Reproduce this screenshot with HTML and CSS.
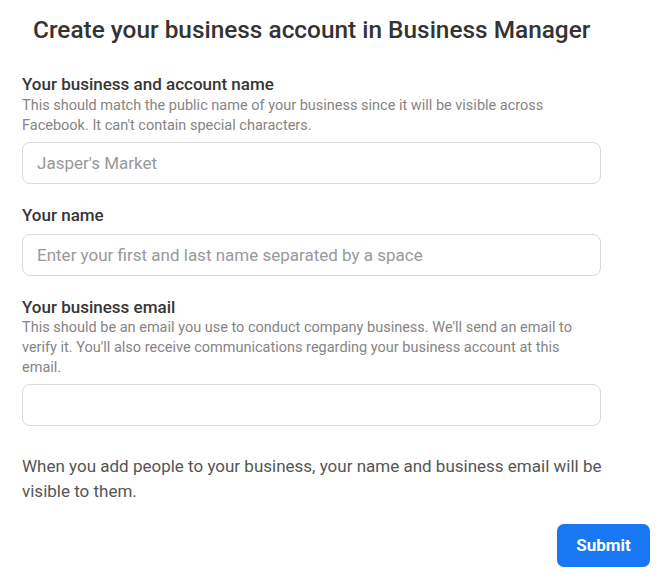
FILE: index.html
```html
<!DOCTYPE html>
<html>
<head>
<meta charset="utf-8">
<link rel="stylesheet" href="styles.css">
</head>
<body>
<div class="page">
  <h1 class="title">Create your business account in Business Manager</h1>
  <div class="field first">
    <div class="label">Your business and account name</div>
    <div class="desc">This should match the public name of your business since it will be visible across Facebook. It can't contain special characters.</div>
    <div class="input"><span class="ph">Jasper's Market</span></div>
  </div>
  <div class="field second">
    <div class="label">Your name</div>
    <div class="input"><span class="ph">Enter your first and last name separated by a space</span></div>
  </div>
  <div class="field">
    <div class="label">Your business email</div>
    <div class="desc">This should be an email you use to conduct company business. We'll send an email to verify it. You'll also receive communications regarding your business account at this email.</div>
    <div class="input"></div>
  </div>
  <p class="note">When you add people to your business, your name and business email will be visible to them.</p>
  <div class="actions"><button class="submit">Submit</button></div>
</div>
</body>
</html>
```
FILE: styles.css
```css
* { box-sizing: border-box; }
html, body { margin: 0; padding: 0; background: #fff; }
body { font-family: Roboto, "Liberation Sans", sans-serif; color: #333; }
.page { padding: 14px 11px 0 22px; display: flex; flex-direction: column; }
.title { margin: 0 0 0 11px; font-size: 24.4px; font-weight: 500; color: #333; line-height: 32px; }
.field { display: flex; flex-direction: column; width: 579px; margin-top: 21px; }
.field.first { margin-top: 28px; }
.label { font-size: 17px; font-weight: 500; color: #363636; line-height: 20px; }
.desc { font-size: 14.5px; color: #858585; line-height: 20px; margin-top: 1.5px; max-width: 552px; }
.input { height: 42px; border: 1px solid #dadada; border-radius: 8px; margin-top: 6px; display: flex; align-items: center; padding-left: 14px; }
.field.second .input { margin-top: 9px; }
.ph { font-size: 17px; color: #999; }
.note { margin: 28px 0 0; width: 600px; font-size: 17px; line-height: 25px; color: #555; }
.actions { display: flex; justify-content: flex-end; margin-top: 19.5px; }
.submit { width: 93px; height: 43px; background: #1877f2; color: #fff; border: none; border-radius: 7px; font-family: Roboto, "Liberation Sans", sans-serif; font-size: 17px; font-weight: 700; }
```
